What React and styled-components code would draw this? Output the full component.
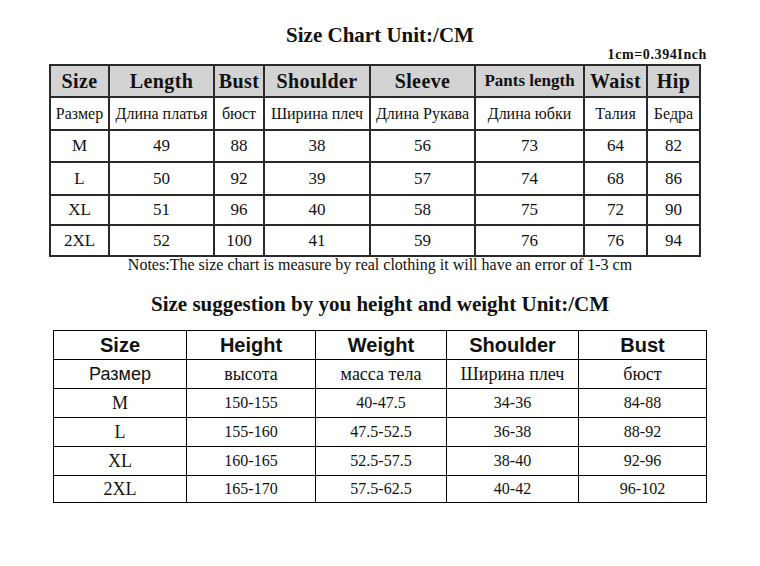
import React from 'react'
import styled, { createGlobalStyle } from 'styled-components'

const GlobalStyle = createGlobalStyle`
  html, body {
    margin: 0;
    padding: 0;
    background: #fff;
  }
`

const chartCols = [59, 105, 50, 106, 105, 109, 63, 53]
const chartHead = ['Size', 'Length', 'Bust', 'Shoulder', 'Sleeve', 'Pants length', 'Waist', 'Hip']
const chartRus = ['Размер', 'Длина платья', 'бюст', 'Ширина плеч', 'Длина Рукава', 'Длина юбки', 'Талия', 'Бедра']
const chartRows = [
  { h: 32, cells: ['M', '49', '88', '38', '56', '73', '64', '82'] },
  { h: 33, cells: ['L', '50', '92', '39', '57', '74', '68', '86'] },
  { h: 30, cells: ['XL', '51', '96', '40', '58', '75', '72', '90'] },
  { h: 31, cells: ['2XL', '52', '100', '41', '59', '76', '76', '94'] },
]

const suggestCols = [133, 129, 131, 132, 128]
const suggestHead = ['Size', 'Height', 'Weight', 'Shoulder', 'Bust']
const suggestRus = ['Размер', 'высота', 'масса тела', 'Ширина плеч', 'бюст']
const suggestRows = [
  { h: 29, cells: ['M', '150-155', '40-47.5', '34-36', '84-88'] },
  { h: 29, cells: ['L', '155-160', '47.5-52.5', '36-38', '88-92'] },
  { h: 29, cells: ['XL', '160-165', '52.5-57.5', '38-40', '92-96'] },
  { h: 27, cells: ['2XL', '165-170', '57.5-62.5', '40-42', '96-102'] },
]

const App = () => {
  return (
    <>
      <GlobalStyle />
      <Page>
        <Title top={23}>Size Chart Unit:/CM</Title>
        <Inch>1cm=0.394Inch</Inch>
        <ChartTable left={49} width={650}>
          <colgroup>
            {chartCols.map((w, i) => <col key={i} style={{ width: w }} />)}
          </colgroup>
          <tbody>
            <HeadRow h={32}>
              {chartHead.map((t) => (
                <HeadCell key={t} small={t === 'Pants length'}>{t}</HeadCell>
              ))}
            </HeadRow>
            <tr style={{ height: 33 }}>
              {chartRus.map((t) => <RusCell key={t}>{t}</RusCell>)}
            </tr>
            {chartRows.map((r) => (
              <tr key={r.cells[0]} style={{ height: r.h }}>
                {r.cells.map((c, i) => <NumCell key={i}>{c}</NumCell>)}
              </tr>
            ))}
          </tbody>
        </ChartTable>
        <Notes>Notes:The size chart is measure by real clothing it will have an error of 1-3 cm</Notes>
        <Title top={19}>Size suggestion by you height and weight Unit:/CM</Title>
        <SuggestTable left={53} width={653}>
          <colgroup>
            {suggestCols.map((w, i) => <col key={i} style={{ width: w }} />)}
          </colgroup>
          <tbody>
            <SuggestRow h={29}>
              {suggestHead.map((t) => <SansHead key={t}>{t}</SansHead>)}
            </SuggestRow>
            <SuggestRow h={29}>
              {suggestRus.map((t, i) => (
                i === 0 ? <SansCell key={t}>{t}</SansCell> : <SerifRus key={t}>{t}</SerifRus>
              ))}
            </SuggestRow>
            {suggestRows.map((r) => (
              <SuggestRow key={r.cells[0]} h={r.h}>
                {r.cells.map((c, i) => (
                  i === 0 ? <SizeCell key={i}>{c}</SizeCell> : <DataCell key={i}>{c}</DataCell>
                ))}
              </SuggestRow>
            ))}
          </tbody>
        </SuggestTable>
      </Page>
    </>
  )
}

export default App

const Page = styled.div`
width: 760px;
height: 566px;
display: flex;
flex-direction: column;
align-items: center;
color: #111;
font-family: "Liberation Serif", "Times New Roman", serif;
overflow: hidden;
`
const Title = styled.h1`
margin: ${(p) => p.top}px 0 0 0;
font-size: 21px;
line-height: 24px;
font-weight: bold;
`
const Inch = styled.div`
align-self: flex-end;
margin-right: 53px;
font-size: 14px;
line-height: 16px;
font-weight: bold;
letter-spacing: 0.6px;
`
const ChartTable = styled.table`
align-self: flex-start;
margin: 1px 0 0 ${(p) => p.left}px;
width: ${(p) => p.width}px;
table-layout: fixed;
border-collapse: collapse;
border: 2px solid #2a2a2a;
td {
  border: 2px solid #2a2a2a;
  padding: 0;
  text-align: center;
  vertical-align: middle;
  white-space: nowrap;
}
`
const HeadRow = styled.tr`
height: ${(p) => p.h}px;
background: #d3d3d3;
`
const HeadCell = styled.td`
font-weight: bold;
font-size: ${(p) => (p.small ? 17 : 20)}px;
letter-spacing: ${(p) => (p.small ? 0 : 0.4)}px;
`
const RusCell = styled.td`
font-size: 16px;
`
const NumCell = styled.td`
font-size: 17px;
`
const Notes = styled.div`
font-size: 16px;
line-height: 16px;
`
const SuggestTable = styled.table`
align-self: flex-start;
margin: 14px 0 0 ${(p) => p.left}px;
width: ${(p) => p.width}px;
table-layout: fixed;
border-collapse: collapse;
border: 1.5px solid #000;
td {
  border: 1.5px solid #000;
  padding: 0;
  text-align: center;
  vertical-align: middle;
  white-space: nowrap;
}
`
const SuggestRow = styled.tr`
height: ${(p) => p.h}px;
`
const SansHead = styled.td`
font-family: "Liberation Sans", Arial, sans-serif;
font-weight: bold;
font-size: 20px;
`
const SansCell = styled.td`
font-family: "Liberation Sans", Arial, sans-serif;
font-size: 18px;
`
const SerifRus = styled.td`
font-size: 18px;
`
const SizeCell = styled.td`
font-size: 18px;
`
const DataCell = styled.td`
font-size: 16px;
`
